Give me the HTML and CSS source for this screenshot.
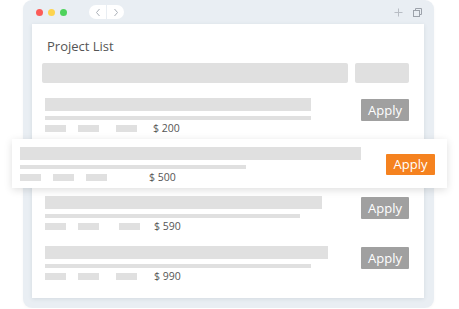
FILE: index.html
```html
<!DOCTYPE html>
<html lang="en">
<head>
    <meta charset="UTF-8">
    <meta name="viewport" content="width=device-width, initial-scale=1.0">
    <title>Project List</title>
    <link rel="stylesheet" href="styles.css">
</head>
<body>

    <div class="window">
        <div class="title-bar">
            <span class="dot red"></span>
            <span class="dot yellow"></span>
            <span class="dot green"></span>
            <div class="nav">
                <span class="nav-btn">
                    <svg width="6" height="9" viewBox="0 0 6 9"><path d="M4.5 1 L1.5 4.5 L4.5 8" fill="none" stroke="#aab0b8" stroke-width="1"/></svg>
                </span>
                <span class="nav-btn">
                    <svg width="6" height="9" viewBox="0 0 6 9"><path d="M1.5 1 L4.5 4.5 L1.5 8" fill="none" stroke="#aab0b8" stroke-width="1"/></svg>
                </span>
            </div>
            <div class="win-icons">
                <svg width="9" height="9" viewBox="0 0 9 9"><path d="M4.5 0.5 V8.5 M0.5 4.5 H8.5" stroke="#b8bdc4" stroke-width="1"/></svg>
                <svg width="9" height="9" viewBox="0 0 9 9"><rect x="0.5" y="2.5" width="6" height="6" fill="none" stroke="#9ca2aa"/><path d="M2.5 2.5 V0.5 H8.5 V6.5 H6.5" fill="none" stroke="#9ca2aa"/></svg>
            </div>
        </div>

        <div class="page">
            <h1>Project List</h1>
            <div class="search">
                <div class="search-input"></div>
                <div class="search-btn"></div>
            </div>

            <div class="list">
                <div class="row">
                    <div class="lines">
                        <div class="bar-title" style="width: 266px"></div>
                        <div class="bar-sub" style="width: 266px"></div>
                        <div class="meta">
                            <span class="blk"></span><span class="blk"></span><span class="blk gap-wide"></span>
                            <span class="price gap-16">$ 200</span>
                        </div>
                    </div>
                    <button class="apply">Apply</button>
                </div>

                <div class="row featured">
                    <div class="lines">
                        <div class="bar-title" style="width: 341px"></div>
                        <div class="bar-sub" style="width: 226px"></div>
                        <div class="meta">
                            <span class="blk"></span><span class="blk"></span><span class="blk"></span>
                            <span class="price gap-42">$ 500</span>
                        </div>
                    </div>
                    <button class="apply orange">Apply</button>
                </div>

                <div class="row">
                    <div class="lines">
                        <div class="bar-title" style="width: 277px"></div>
                        <div class="bar-sub" style="width: 255px"></div>
                        <div class="meta">
                            <span class="blk"></span><span class="blk"></span><span class="blk gap-wider"></span>
                            <span class="price gap-14">$ 590</span>
                        </div>
                    </div>
                    <button class="apply">Apply</button>
                </div>

                <div class="row">
                    <div class="lines">
                        <div class="bar-title" style="width: 283px"></div>
                        <div class="bar-sub" style="width: 266px"></div>
                        <div class="meta">
                            <span class="blk"></span><span class="blk"></span><span class="blk gap-wide"></span>
                            <span class="price gap-17">$ 990</span>
                        </div>
                    </div>
                    <button class="apply">Apply</button>
                </div>
            </div>
        </div>
    </div>

</body>
</html>
```

FILE: styles.css
```css
body {
    font-family: "Open Sans", Arial, sans-serif;
    margin: 0;
    padding: 0;
    background-color: #ffffff;
}

.window {
    width: 411px;
    height: 308px;
    margin-left: 23px;
    background-color: #e9eef3;
    border-radius: 9px;
    box-shadow: 0 1px 3px rgba(0, 0, 0, 0.04);
    display: flex;
    flex-direction: column;
}

.title-bar {
    height: 24px;
    display: flex;
    align-items: center;
    padding: 0 12px 0 13px;
}

.dot {
    width: 7px;
    height: 7px;
    border-radius: 50%;
    margin-right: 5px;
}

.red { background-color: #fc5b57; }
.yellow { background-color: #fdd44f; }
.green { background-color: #4ed35c; }

.nav {
    display: flex;
    height: 14px;
    margin-left: 17px;
    background-color: #ffffff;
    border-radius: 7px;
}

.nav-btn {
    width: 17px;
    display: flex;
    align-items: center;
    justify-content: center;
}

.nav-btn + .nav-btn {
    border-left: 1px solid #e9eef3;
}

.win-icons {
    margin-left: auto;
    display: flex;
    gap: 10px;
    align-items: center;
}

.page {
    height: 274px;
    margin: 0 10px 0 9px;
    background-color: #ffffff;
    box-shadow: 0 1px 4px rgba(60, 80, 100, 0.12);
    padding: 13px 15px 0 10px;
    box-sizing: border-box;
}

.page h1 {
    font-size: 13px;
    font-weight: normal;
    line-height: 18px;
    color: #555555;
    margin: 0 0 8px 5px;
}

.search {
    display: flex;
    gap: 7px;
    height: 20px;
}

.search-input {
    flex: 1;
    background-color: #e0e0e0;
    border-radius: 2px;
}

.search-btn {
    width: 54px;
    background-color: #e0e0e0;
    border-radius: 2px;
}

.list {
    display: flex;
    flex-direction: column;
    margin: 15px 0 0 3px;
}

.row {
    display: flex;
    justify-content: space-between;
    align-items: flex-start;
}

.row + .row {
    margin-top: 16px;
}

.row.featured {
    margin: 7px -38px 8px -33px;
    padding: 8px 12px 7px 8px;
    background-color: #ffffff;
    box-shadow: 0 2px 8px rgba(0, 0, 0, 0.13);
    align-items: center;
}

.row.featured + .row {
    margin-top: 0;
}

.bar-title {
    height: 13px;
    background-color: #e0e0e0;
}

.bar-sub {
    height: 4px;
    margin-top: 5px;
    background-color: #e0e0e0;
}

.meta {
    display: flex;
    align-items: center;
    height: 7px;
    margin-top: 5px;
}

.blk {
    width: 21px;
    height: 7px;
    background-color: #e0e0e0;
    margin-right: 12px;
}

.blk:nth-child(3) { margin-right: 0; }
.blk.gap-wide { margin-left: 5px; }
.blk.gap-wider { margin-left: 8px; }

.price {
    font-size: 10.5px;
    line-height: 7px;
    color: #555555;
    white-space: nowrap;
}

.gap-14 { margin-left: 14px; }
.gap-16 { margin-left: 16px; }
.gap-17 { margin-left: 17px; }
.gap-42 { margin-left: 42px; }

.apply {
    width: 48px;
    height: 22px;
    margin-top: 1px;
    padding: 0;
    border: none;
    border-radius: 1px;
    background-color: #a0a0a0;
    color: #ffffff;
    font-family: "Open Sans", Arial, sans-serif;
    font-size: 13px;
    cursor: pointer;
}

.apply.orange {
    width: 49px;
    height: 21px;
    margin-top: 0;
    background-color: #f5821f;
}
```
